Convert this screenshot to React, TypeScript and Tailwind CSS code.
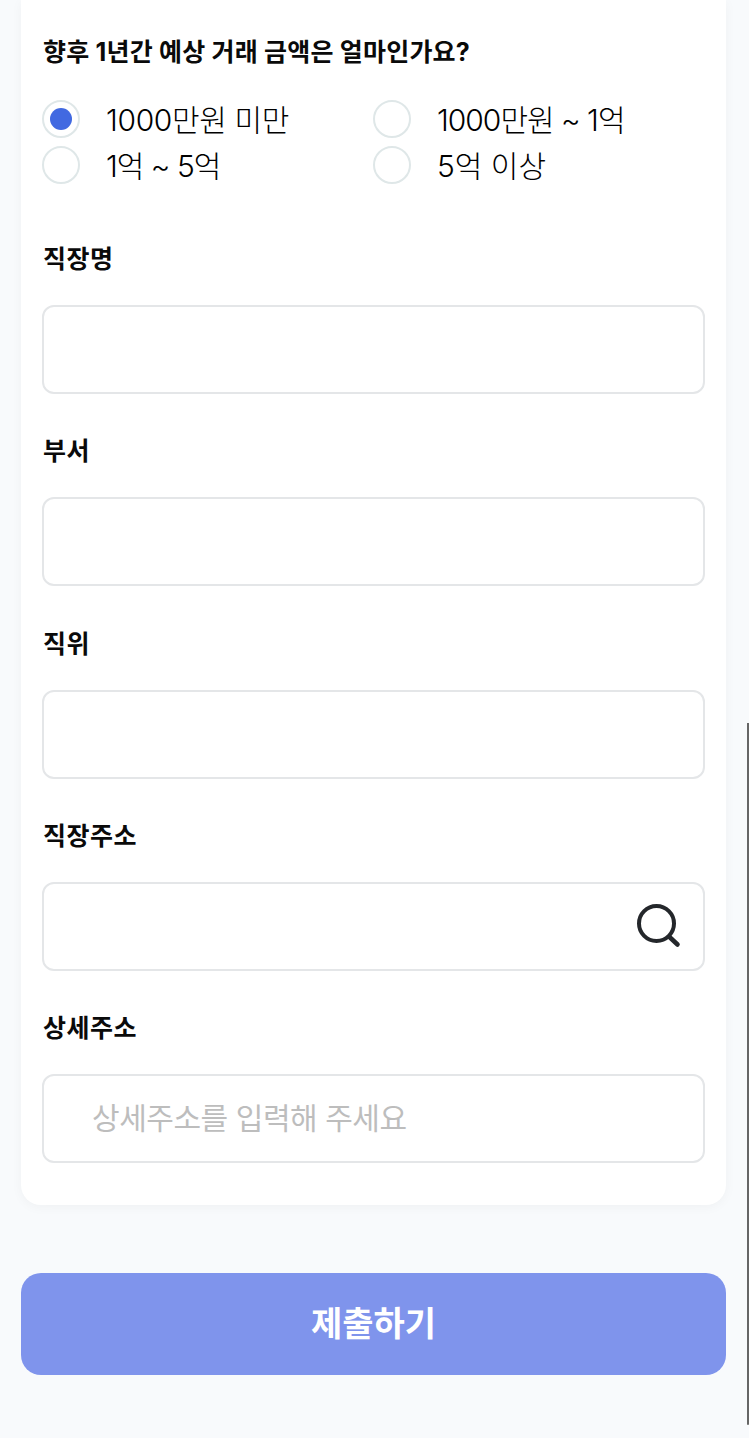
const font = "font-['Inter','Noto_Sans_CJK_KR',sans-serif]";

function Field({ label, placeholder, search }: { label: string; placeholder?: string; search?: boolean }) {
  return (
    <div className="flex flex-col">
      <div className="h-[28px] text-[25px] leading-[28px] font-bold text-[#0a0a0a] tracking-[0.5px] pl-[1px]">{label}</div>
      <div className="mt-[32px] h-[89px] rounded-[12px] border-2 border-[#e4e6e8] bg-white flex items-center justify-between pl-[48px] pr-[20px]">
        <span className="text-[30px] leading-[38px] pb-[2px] text-[#bdbdbd] tracking-[-0.45px]">{placeholder ?? ""}</span>
        {search && (
          <svg width="46" height="46" viewBox="0 0 46 46" fill="none" stroke="#24272b" strokeWidth="4" strokeLinecap="round">
            <circle cx="19.5" cy="20.5" r="17.5" />
            <path d="M32.5 34L40.5 41.5" strokeWidth="4.6" />
          </svg>
        )}
      </div>
    </div>
  );
}

function Radio({ label, checked, spacing }: { label: string; checked?: boolean; spacing: string }) {
  return (
    <div className="flex items-center h-[38px]">
      <div className="w-[38px] h-[38px] rounded-full border-2 border-[#dfe7e8] bg-white flex items-center justify-center shrink-0">
        {checked && <div className="w-[22px] h-[22px] rounded-full bg-[#4169e1]" />}
      </div>
      <span className={`ml-[26px] text-[30px] leading-[38px] pt-[2px] text-black font-light ${spacing}`}>{label}</span>
    </div>
  );
}

export default function App() {
  return (
    <div className={`${font} relative w-[749px] h-[1438px] overflow-hidden bg-[#f8fafc]`}>
      <div className="mx-[21px] w-[705px] h-[1205px] bg-white rounded-b-[20px] shadow-[0_2px_12px_rgba(0,0,0,0.04)] px-[21px] pt-[38px]">
        <div className="h-[28px] text-[25px] leading-[28px] font-bold text-[#0a0a0a] tracking-[0.2px] pl-[1px]">향후 1년간 예상 거래 금액은 얼마인가요?</div>
        <div className="mt-[34px] grid grid-cols-[331px_1fr] gap-y-[8px]">
          <Radio label="1000만원 미만" checked spacing="tracking-[-0.35px]" />
          <Radio label="1000만원 ~ 1억" spacing="tracking-[-1px]" />
          <Radio label="1억 ~ 5억" spacing="tracking-[-1px]" />
          <Radio label="5억 이상" spacing="tracking-[0px]" />
        </div>
        <div className="mt-[61px] flex flex-col gap-[43.25px]">
          <Field label="직장명" />
          <Field label="부서" />
          <Field label="직위" />
          <Field label="직장주소" search />
          <Field label="상세주소" placeholder="상세주소를 입력해 주세요" />
        </div>
      </div>
      <button className="mt-[68px] ml-[21px] w-[705px] h-[102px] rounded-[20px] bg-[#7f94ec] text-white text-[34px] font-bold flex items-center justify-center pb-[2px]">제출하기</button>
      <div className="absolute right-0 top-[723px] w-[2px] h-[702px] bg-[#666] rounded-b-full" />
    </div>
  );
}
